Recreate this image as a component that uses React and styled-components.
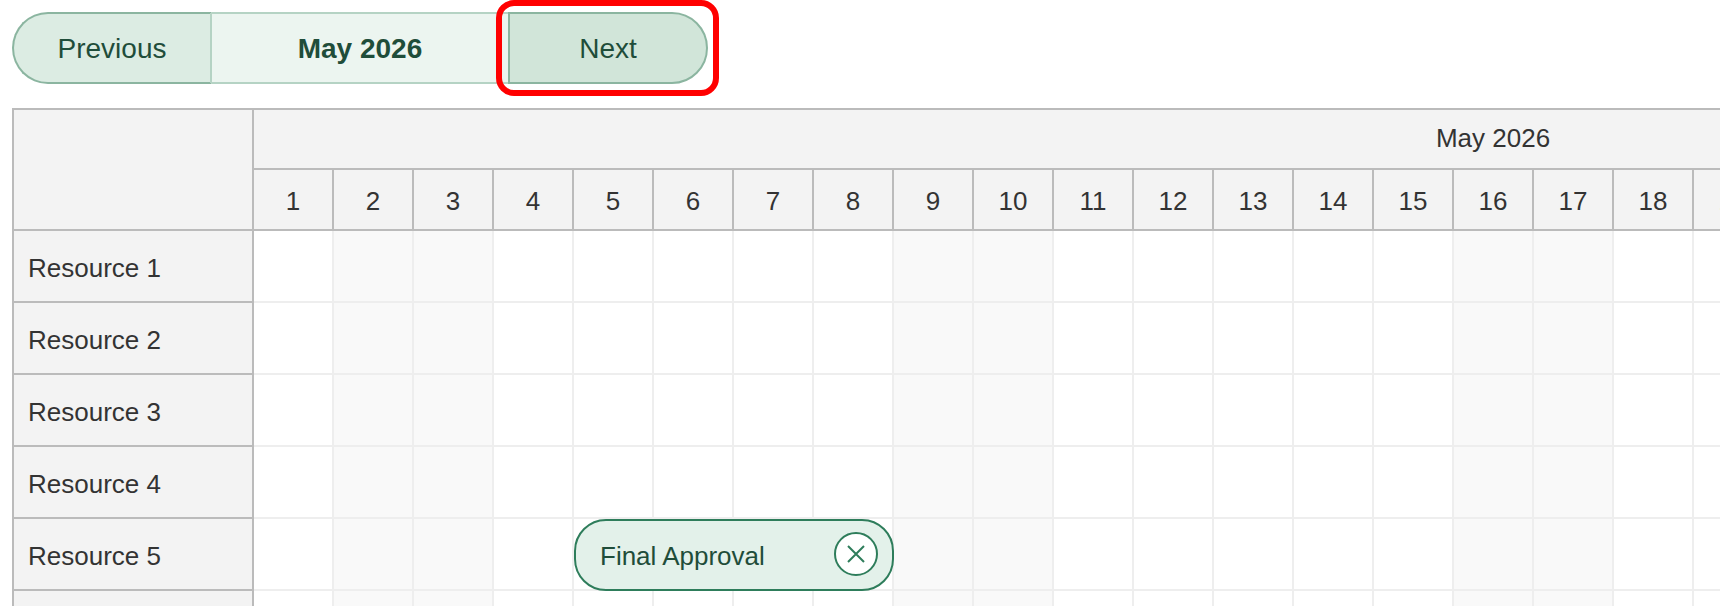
import React from "react";
import styled, { createGlobalStyle } from "styled-components";

const DAYS = Array.from({ length: 31 }, (_, i) => i + 1);
const WEEKENDS = [2, 3, 9, 10, 16, 17, 23, 24, 30, 31];
const RESOURCES = [1, 2, 3, 4, 5, 6, 7];

const GlobalStyle = createGlobalStyle`
  html, body {
    margin: 0;
    height: 606px;
    overflow: hidden;
    background: #fff;
  }
  body {
    font-family: "Liberation Sans", Arial, sans-serif;
    color: #333;
  }
`;

const App = () => {
  return (
    <Page>
      <GlobalStyle />
      <Nav>
        <NavButton $side="left">Previous</NavButton>
        <NavTitle>May 2026</NavTitle>
        <NextHighlight>
          <NavButton $side="right">Next</NavButton>
        </NextHighlight>
      </Nav>

      <Scheduler>
        <Corner />
        <MonthCell>May 2026</MonthCell>
        <DayRow>
          {DAYS.map((day) => (
            <DayCell key={day}>{day}</DayCell>
          ))}
        </DayRow>

        {RESOURCES.map((resource) => (
          <React.Fragment key={resource}>
            <ResourceCell>Resource {resource}</ResourceCell>
            <Lane>
              {DAYS.map((day) => (
                <LaneCell key={day} $weekend={WEEKENDS.includes(day)} $day={day} />
              ))}
              {resource === 5 && (
                <EventPill $start={5} $span={4}>
                  <EventLabel>Final Approval</EventLabel>
                  <CloseButton aria-label="Remove">
                    <svg width="20" height="20" viewBox="0 0 20 20" fill="none">
                      <path
                        d="M2 2 L18 18 M18 2 L2 18"
                        stroke="#2e7d5b"
                        strokeWidth="2"
                      />
                    </svg>
                  </CloseButton>
                </EventPill>
              )}
            </Lane>
          </React.Fragment>
        ))}
      </Scheduler>
    </Page>
  );
};

const Page = styled.div`
  padding: 12px;
  width: 2800px;
  box-sizing: border-box;
`;

const Nav = styled.div`
  display: grid;
  grid-template-columns: 200px 296px 200px;
  height: 72px;
  margin-bottom: 24px;
  width: 696px;
  font-size: 28px;
  color: #1f4d3a;
`;

const NavButton = styled.button`
  box-sizing: border-box;
  width: 200px;
  height: 72px;
  padding: 2px 0 0;
  font: inherit;
  color: inherit;
  border: 2px solid #8bb5a0;
  border-right-color: ${(p) => (p.$side === "left" ? "#b5d3c4" : "#8bb5a0")};
  border-radius: ${(p) => (p.$side === "left" ? "36px 0 0 36px" : "0 36px 36px 0")};
  background: ${(p) => (p.$side === "left" ? "#dcece3" : "#d1e5d9")};
`;

const NavTitle = styled.div`
  box-sizing: border-box;
  display: flex;
  align-items: center;
  justify-content: center;
  padding-top: 2px;
  font-weight: 700;
  background: #ecf5f0;
  border-top: 2px solid #b5d3c4;
  border-bottom: 2px solid #b5d3c4;
`;

const NextHighlight = styled.div`
  position: relative;

  &::after {
    content: "";
    position: absolute;
    left: -12px;
    right: -11px;
    top: -12px;
    bottom: -12px;
    border: 6px solid #ff0000;
    border-radius: 18px;
    pointer-events: none;
  }
`;

const Scheduler = styled.div`
  display: grid;
  grid-template-columns: 240px 2480px;
  width: 2722px;
  border-top: 2px solid #bbb;
  border-left: 2px solid #bbb;
`;

const Corner = styled.div`
  grid-row: span 2;
  background: #f3f3f3;
  border-right: 2px solid #bbb;
  border-bottom: 2px solid #bbb;
`;

const MonthCell = styled.div`
  box-sizing: border-box;
  height: 60px;
  padding-bottom: 2px;
  display: flex;
  align-items: center;
  justify-content: center;
  font-size: 26px;
  background: #f3f3f3;
  border-bottom: 2px solid #bbb;
  border-right: 2px solid #bbb;
`;

const DayRow = styled.div`
  display: grid;
  grid-template-columns: repeat(31, 80px);
`;

const DayCell = styled.div`
  box-sizing: border-box;
  height: 61px;
  padding-top: 4px;
  display: flex;
  align-items: center;
  justify-content: center;
  font-size: 26px;
  background: #f3f3f3;
  border-right: 2px solid #bbb;
  border-bottom: 2px solid #bbb;
`;

const ResourceCell = styled.div`
  box-sizing: border-box;
  height: 72px;
  padding: 4px 0 0 14px;
  display: flex;
  align-items: center;
  font-size: 26px;
  background: #f3f3f3;
  border-right: 2px solid #bbb;
  border-bottom: 2px solid #bbb;
`;

const Lane = styled.div`
  display: grid;
  grid-template-columns: repeat(31, 80px);
  grid-template-rows: 72px;
`;

const LaneCell = styled.div`
  grid-row: 1;
  grid-column: ${(p) => p.$day};
  box-sizing: border-box;
  background: ${(p) => (p.$weekend ? "#f9f9f9" : "#fff")};
  border-right: 2px solid #eee;
  border-bottom: 2px solid #eee;
`;

const EventPill = styled.div`
  grid-row: 1;
  grid-column: ${(p) => p.$start} / span ${(p) => p.$span};
  z-index: 1;
  box-sizing: border-box;
  display: flex;
  align-items: center;
  justify-content: space-between;
  padding: 0 14px 0 24px;
  background: #e3f1ea;
  border: 2px solid #2e7d5b;
  border-radius: 32px;
  font-size: 26px;
  color: #1f4d3a;
`;

const EventLabel = styled.span`
  padding-top: 2px;
`;

const CloseButton = styled.button`
  box-sizing: border-box;
  width: 44px;
  height: 44px;
  padding: 0;
  margin-bottom: 3px;
  display: flex;
  align-items: center;
  justify-content: center;
  background: #fff;
  border: 2px solid #2e7d5b;
  border-radius: 50%;
`;

export default App;
